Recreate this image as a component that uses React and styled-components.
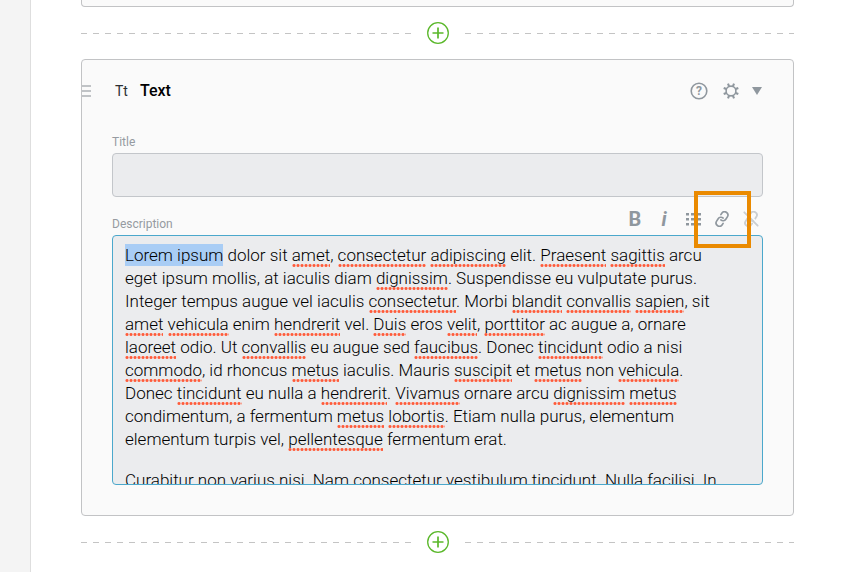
import React from "react";
import styled, { createGlobalStyle } from "styled-components";

const GlobalStyle = createGlobalStyle`
  *, *::before, *::after { box-sizing: border-box; }
  body {
    margin: 0;
    background: #fff;
    color: #000;
    font-family: Roboto, "Liberation Sans", sans-serif;
  }
`;

const Page = styled.div`
  display: flex;
  min-height: 100vh;
`;

const Sidebar = styled.aside`
  flex: 0 0 31px;
  background: #f4f4f4;
  border-right: 1px solid #dedede;
`;

const Blocks = styled.main`
  flex: 1;
  min-width: 0;
  padding: 0 72px 0 50px;
`;

const Card = styled.section`
  background: #fafafa;
  border: 1px solid #c2c3c5;
  border-radius: 4px;
  padding-bottom: 30px;
`;

const PreviousCard = styled(Card)`
  height: 7px;
  padding: 0;
  border-top: 0;
  border-radius: 0 0 4px 4px;
`;

const Divider = styled.div`
  display: flex;
  align-items: center;
  gap: 16px;
  height: 52px;
`;

const Dashes = styled.span`
  flex: 1;
  height: 1px;
  background: repeating-linear-gradient(90deg, #c4c4c4 0 6px, transparent 6px 12px);
`;

const IconButton = styled.button`
  display: flex;
  align-items: center;
  justify-content: center;
  flex: none;
  width: ${(p) => p.$width || 24}px;
  height: 24px;
  padding: 0;
  border: 0;
  background: none;
  color: ${(p) => p.$color || "#8f979e"};
  font: inherit;
  cursor: pointer;
`;

const FormatButton = styled(IconButton)`
  position: relative;
  font-size: 20px;
  font-weight: 700;
  font-style: ${(p) => (p.$italic ? "italic" : "normal")};
`;

const Callout = styled.span`
  position: absolute;
  top: -16px;
  left: -16px;
  width: 57px;
  height: 57px;
  border: 4px solid #ea8a00;
  z-index: 1;
  pointer-events: none;
`;

const CardHeader = styled.header`
  display: flex;
  align-items: center;
  padding: 19px 30px 0 0;
`;

const TypeMark = styled.span`
  width: 25px;
  margin-left: 24px;
  font-size: 14px;
  line-height: 24px;
  color: #2b2f33;
`;

const CardTitle = styled.h2`
  flex: 1;
  margin: 0;
  font-size: 16px;
  line-height: 24px;
  font-weight: 500;
`;

const HeaderActions = styled.div`
  display: flex;
  gap: 8px;
`;

const HelpMark = styled.text`
  font: 700 12px Roboto, sans-serif;
  fill: currentColor;
  stroke: none;
  text-anchor: middle;
`;

const Fields = styled.div`
  padding: 0 30px;
`;

const FieldHead = styled.div`
  display: flex;
  align-items: flex-end;
  justify-content: space-between;
  padding-top: ${(p) => p.$top}px;
`;

const Label = styled.label`
  padding-bottom: 4px;
  font-size: 12px;
  line-height: 14px;
  color: #969ba1;
`;

const Toolbar = styled.div`
  display: flex;
  gap: 5px;
  padding-bottom: 4px;
`;

const TextInput = styled.input`
  display: block;
  width: 100%;
  height: 44px;
  padding: 0 12px;
  border: 1px solid #c3c6ca;
  border-radius: 4px;
  background: #ebecee;
  font: 300 17px Roboto, sans-serif;
`;

const Editor = styled.div`
  height: 250px;
  padding: 8px 40px 0 12px;
  overflow: hidden;
  border: 1px solid #4ba8cc;
  border-radius: 4px;
  outline: 0;
  background: #ebecee;
  font-size: 17px;
  line-height: 23px;
  font-weight: 300;
  font-variant-ligatures: none;

  p { margin: 0 0 18px; }
`;

const Selected = styled.mark`
  padding: 1px 0;
  background: #a9cdf5;
  color: inherit;
`;

const Misspelt = styled.span`
  padding-bottom: 2px;
  background: radial-gradient(circle at 50% 50%, #ff5b3a 1px, transparent 2px) left bottom / 4px 3px repeat-x;
`;

const CHAIN = (
  <>
    <path d="M10 13a5 5 0 0 0 7.54.54l3-3a5 5 0 0 0-7.07-7.07l-1.72 1.71" />
    <path d="M14 11a5 5 0 0 0-7.54-.54l-3 3a5 5 0 0 0 7.07 7.07l1.71-1.71" />
  </>
);

function LinkIcon() {
  return (
    <svg width="16" height="16" viewBox="0 0 24 24" fill="none" stroke="currentColor" strokeWidth="2.5" strokeLinecap="round">
      <g transform="rotate(-12 12 12)">{CHAIN}</g>
    </svg>
  );
}

function UnlinkIcon() {
  return (
    <svg width="16" height="16" viewBox="0 0 24 24" fill="none" stroke="currentColor" strokeWidth="2.8" strokeLinecap="round">
      <g transform="rotate(-12 12 12)">{CHAIN}</g>
      <path d="M5 1 24 20" stroke="#fafafa" strokeWidth="2.5" />
      <path d="M2 2 22 22" />
    </svg>
  );
}

function ListIcon() {
  return (
    <svg width="16" height="13" viewBox="0 0 16 13" fill="currentColor">
      <path d="M1 0h3v2.6H1zM6 0h10v2.6H6zM1 5h3v2.6H1zM6 5h10v2.6H6zM1 10h3v2.6H1zM6 10h10v2.6H6z" />
    </svg>
  );
}

function HelpIcon() {
  return (
    <svg width="18" height="18" viewBox="0 0 18 18" fill="none" stroke="currentColor">
      <circle cx="9" cy="9" r="7.8" strokeWidth="1.6" />
      <HelpMark x="9" y="13">?</HelpMark>
    </svg>
  );
}

function GearIcon() {
  return (
    <svg width="16" height="16" viewBox="-8 -8 16 16" fill="none" stroke="currentColor">
      <circle r="4.9" strokeWidth="1.6" />
      {[22.5, 67.5, 112.5, 157.5, 202.5, 247.5, 292.5, 337.5].map((a) => (
        <path key={a} d="M0-5V-7.9" strokeWidth="2.1" transform={`rotate(${a})`} />
      ))}
    </svg>
  );
}

function CaretIcon() {
  return (
    <svg width="10" height="8" viewBox="0 0 10 8" fill="currentColor">
      <path d="M0 0h10L5 8z" />
    </svg>
  );
}

function GripIcon() {
  return (
    <svg width="9" height="12" viewBox="0 0 9 12" fill="currentColor">
      <path d="M0 0h9v2H0zM0 5h9v2H0zM0 10h9v2H0z" />
    </svg>
  );
}

function AddIcon() {
  return (
    <svg width="22" height="22" viewBox="0 0 22 22" fill="none" stroke="currentColor">
      <circle cx="11" cy="11" r="10.3" strokeWidth="1.3" />
      <path d="M11 5.5v11M5.5 11h11" strokeWidth="1.7" />
    </svg>
  );
}

function AddDivider() {
  return (
    <Divider>
      <Dashes />
      <IconButton type="button" $width={22} $color="#5bb82b" aria-label="Add block">
        <AddIcon />
      </IconButton>
      <Dashes />
    </Divider>
  );
}

/* Words between asterisks are flagged by the spell checker. */
const BODY =
  " dolor sit *amet*, *consectetur* *adipiscing* elit. *Praesent* *sagittis* arcu eget ipsum mollis, at iaculis diam *dignissim*. Suspendisse eu vulputate purus. Integer tempus augue vel iaculis *consectetur*. Morbi *blandit* *convallis* *sapien*, sit *amet* *vehicula* enim *hendrerit* vel. *Duis* eros *velit*, *porttitor* ac augue a, ornare *laoreet* odio. Ut *convallis* eu augue sed *faucibus*. Donec *tincidunt* odio a nisi *commodo*, id rhoncus *metus* iaculis. Mauris *suscipit* et *metus* non *vehicula*. Donec *tincidunt* eu nulla a *hendrerit*. *Vivamus* ornare arcu *dignissim* *metus* condimentum, a fermentum *metus* *lobortis*. Etiam nulla purus, elementum elementum turpis vel, *pellentesque* fermentum erat.";

const spellChecked = (text) =>
  text.split("*").map((part, i) => (i % 2 ? <Misspelt key={i}>{part}</Misspelt> : part));

export default function App() {
  return (
    <>
      <GlobalStyle />
      <Page>
        <Sidebar />
        <Blocks>
          <PreviousCard />
          <AddDivider />
          <Card>
            <CardHeader>
              <IconButton type="button" $width={9} $color="#c0c3c6" aria-label="Move block">
                <GripIcon />
              </IconButton>
              <TypeMark aria-hidden="true">Tt</TypeMark>
              <CardTitle>Text</CardTitle>
              <HeaderActions>
                <IconButton type="button" aria-label="Help">
                  <HelpIcon />
                </IconButton>
                <IconButton type="button" aria-label="Settings">
                  <GearIcon />
                </IconButton>
                <IconButton type="button" $width={12} aria-label="Collapse">
                  <CaretIcon />
                </IconButton>
              </HeaderActions>
            </CardHeader>
            <Fields>
              <FieldHead $top={32}>
                <Label htmlFor="title">Title</Label>
              </FieldHead>
              <TextInput id="title" type="text" />
              <FieldHead $top={10}>
                <Label id="description-label">Description</Label>
                <Toolbar role="toolbar" aria-label="Formatting">
                  <FormatButton type="button" aria-label="Bold">B</FormatButton>
                  <FormatButton type="button" $italic aria-label="Italic">i</FormatButton>
                  <FormatButton type="button" aria-label="Bulleted list">
                    <ListIcon />
                  </FormatButton>
                  <FormatButton type="button" aria-label="Insert link">
                    <LinkIcon />
                    <Callout />
                  </FormatButton>
                  <FormatButton type="button" $color="#cbced1" aria-label="Remove link">
                    <UnlinkIcon />
                  </FormatButton>
                </Toolbar>
              </FieldHead>
              <Editor
                role="textbox"
                aria-multiline="true"
                aria-labelledby="description-label"
                contentEditable
                suppressContentEditableWarning
                spellCheck={false}
              >
                <p>
                  <Selected>Lorem ipsum</Selected>
                  {spellChecked(BODY)}
                </p>
                <p>Curabitur non varius nisi. Nam consectetur vestibulum tincidunt. Nulla facilisi. In</p>
              </Editor>
            </Fields>
          </Card>
          <AddDivider />
        </Blocks>
      </Page>
    </>
  );
}
